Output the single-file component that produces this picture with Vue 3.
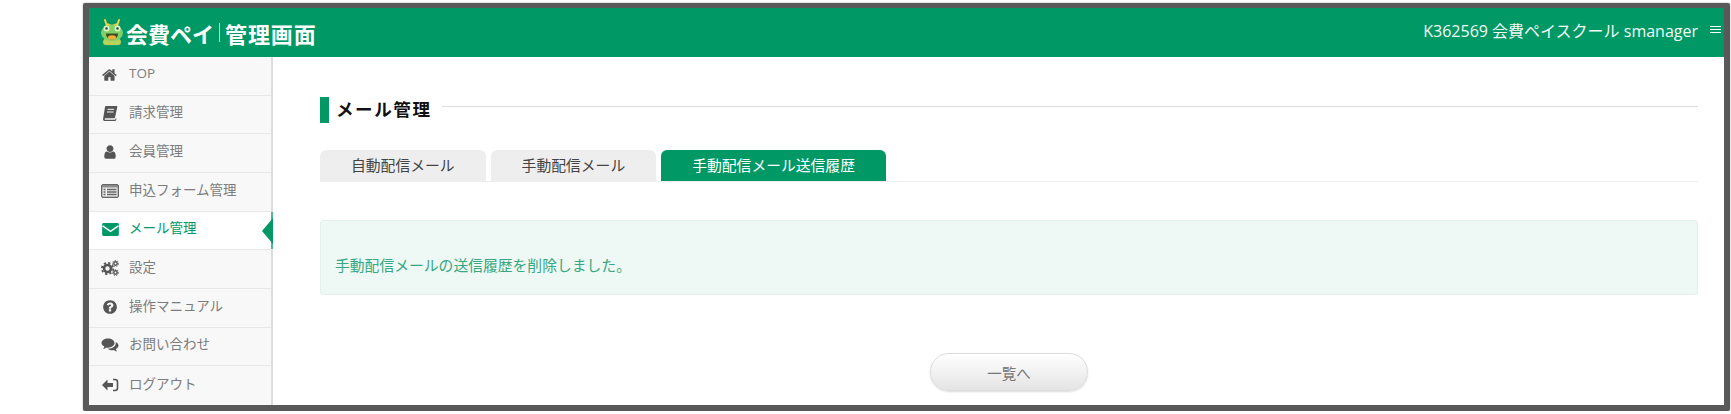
<script setup>
const menu = [
  { label: 'TOP', icon: 'home' },
  { label: '請求管理', icon: 'book' },
  { label: '会員管理', icon: 'user' },
  { label: '申込フォーム管理', icon: 'form' },
  { label: 'メール管理', icon: 'mail', active: true },
  { label: '設定', icon: 'gears' },
  { label: '操作マニュアル', icon: 'help' },
  { label: 'お問い合わせ', icon: 'chat' },
  { label: 'ログアウト', icon: 'logout' },
]
const tabs = [
  { label: '自動配信メール' },
  { label: '手動配信メール' },
  { label: '手動配信メール送信履歴', active: true },
]
</script>

<template>
  <div class="frame">
    <header class="header">
      <div class="logo">
        <svg class="frog" viewBox="0 0 24 28" width="24" height="28">
          <path d="M7 8 L5 2 M17 8 L19 2 M7 6 C10 8 14 8 17 6" fill="none" stroke="#e8d54a" stroke-width="2" stroke-linecap="round" />
          <path d="M3 24c0-2 2-4 4-4h10c2 0 4 2 4 4s-1 3-3 3H6c-2 0-3-1-3-3z" fill="#b9d25a" />
          <ellipse cx="12" cy="15" rx="11" ry="8" fill="#7fd06a" />
          <circle cx="6.500" cy="10.500" r="3" fill="#e4f3c8" />
          <circle cx="17.500" cy="10.500" r="3" fill="#e4f3c8" />
          <circle cx="6.500" cy="10.500" r="1.300" fill="#245a3a" />
          <circle cx="17.500" cy="10.500" r="1.300" fill="#245a3a" />
          <path d="M6 15.500h12c0 3.500-2.500 6-6 6s-6-2.500-6-6z" fill="#3f4a24" />
          <ellipse cx="12" cy="19.500" rx="4" ry="2.200" fill="#f2b035" />
        </svg>
        <span class="logo-a">会費ペイ</span>
        <span class="logo-sep"></span>
        <span class="logo-b">管理画面</span>
      </div>
      <div class="user">
        <span>K362569 会費ペイスクール smanager</span>
        <span class="burger"><i></i><i></i><i></i></span>
      </div>
    </header>

    <div class="body">
      <nav class="side">
        <div v-for="m in menu" :key="m.label" class="row" :class="{ on: m.active }">
          <span class="ico">
            <svg v-if="m.icon === 'home'" viewBox="0 0 1792 1792" width="16" height="16"><path fill="currentColor" d="M1408 992v480q0 26-19 45t-45 19h-384v-384h-256v384h-384q-26 0-45-19t-19-45v-480q0-1 .5-3t.5-3l575-474 575 474q1 2 1 6zm223-69l-62 74q-8 9-21 11h-3q-13 0-21-7l-692-577-692 577q-12 8-24 7-13-2-21-11l-62-74q-8-10-7-23.5t11-21.5l719-599q32-26 76-26t76 26l244 204v-195q0-14 9-23t23-9h192q14 0 23 9t9 23v408l219 182q10 8 11 21.5t-7 23.5z"/></svg>
            <svg v-else-if="m.icon === 'book'" viewBox="0 0 16 16" width="16" height="16"><path fill="currentColor" d="M4 1h10.500c.6 0 .9.500.8 1l-2.300 10.500c-.1.500-.5.800-1 .8H3.500c-.6 0-.9.300-.9.700s.3.700.9.700h9.300c.3 0 .5-.2.600-.4l.3-1 .8.300-.4 1.500c-.1.600-.7 1-1.300 1H3c-1.400 0-2.200-1.100-1.900-2.400L3 2c.1-.6.500-1 1-1z"/><path d="M5.600 4.300h6.500M5 7h6.500" stroke="#f8f8f8" stroke-width="1" fill="none"/></svg>
            <svg v-else-if="m.icon === 'user'" viewBox="0 0 1792 1792" width="16" height="16"><path fill="currentColor" d="M1536 1399q0 109-62.500 187t-150.500 78h-854q-88 0-150.500-78t-62.500-187q0-85 8.500-160.500t31.500-152 58.500-131 94-89 134.500-34.500q131 128 313 128t313-128q76 0 134.500 34.500t94 89 58.500 131 31.500 152 8.500 160.500zm-256-887q0 159-112.500 271.500t-271.500 112.500-271.500-112.500-112.500-271.500 112.500-271.500 271.500-112.500 271.500 112.500 112.500 271.500z"/></svg>
            <svg v-else-if="m.icon === 'form'" viewBox="0 0 18 14" width="18" height="14"><rect x="0.500" y="0.500" width="17" height="13" rx="1.500" fill="#8a8a8a" stroke="#666"/><rect x="1.500" y="3.500" width="15" height="9" fill="#eee"/><path d="M2.500 5.500h2M2.500 8h2M2.500 10.500h2M6 5.500h9.500M6 8h9.500M6 10.500h9.500" stroke="#666" stroke-width="1.300"/></svg>
            <svg v-else-if="m.icon === 'mail'" viewBox="0 0 18 14" width="17" height="13"><rect width="18" height="14" rx="1.500" fill="currentColor"/><path d="M0.500 3 L9 9 L17.500 3" fill="none" stroke="#fff" stroke-width="1.600"/></svg>
            <svg v-else-if="m.icon === 'gears'" viewBox="0 0 18 16" width="18" height="16" fill="none" stroke="currentColor"><circle cx="6.500" cy="8.500" r="3.500" stroke-width="2.600"/><circle cx="6.500" cy="8.500" r="5.600" stroke-width="1.800" stroke-dasharray="2.200 2.200"/><circle cx="14.500" cy="3.500" r="1.700" stroke-width="1.500"/><circle cx="14.500" cy="3.500" r="3" stroke-width="1" stroke-dasharray="1.300 1.300"/><circle cx="14.500" cy="12.500" r="1.700" stroke-width="1.500"/><circle cx="14.500" cy="12.500" r="3" stroke-width="1" stroke-dasharray="1.300 1.300"/></svg>
            <svg v-else-if="m.icon === 'help'" viewBox="0 0 1792 1792" width="16" height="16"><path fill="currentColor" d="M1024 1376v-192q0-14-9-23t-23-9h-192q-14 0-23 9t-9 23v192q0 14 9 23t23 9h192q14 0 23-9t9-23zm256-672q0-88-55.500-163t-138.500-116-170-41q-243 0-371 213-15 24 8 42l132 100q7 6 19 6 16 0 25-12 53-68 86-92 34-24 86-24 48 0 85.500 26t37.500 59q0 38-20 61t-68 45q-63 28-115.500 86.500t-52.500 125.500v36q0 14 9 23t23 9h192q14 0 23-9t9-23q0-19 21.500-49.500t54.500-49.500q32-18 49-28.500t46-35 44.500-48 28-60.500 12.500-81zm384 192q0 209-103 385.500t-279.500 279.500-385.500 103-385.500-103-279.500-279.500-103-385.500 103-385.500 279.500-279.500 385.500-103 385.500 103 279.500 279.500 103 385.500z"/></svg>
            <svg v-else-if="m.icon === 'chat'" viewBox="0 0 18 16" width="18" height="16"><path fill="currentColor" d="M7 1.500c3.600 0 6.500 2 6.500 4.600S10.600 10.700 7 10.700c-.6 0-1.100 0-1.600-.2-.9.800-2 1.300-3.200 1.500.6-.7 1-1.500 1.100-2.400C1.600 8.800.5 7.500.5 6.100.5 3.500 3.400 1.500 7 1.500z"/><path fill="currentColor" d="M14.700 5c1.700.8 2.800 2.100 2.800 3.600 0 1.400-1 2.700-2.600 3.500.2.900.5 1.700 1.100 2.400-1.200-.2-2.300-.7-3.200-1.500-.5.100-1 .2-1.600.2-1.900 0-3.600-.6-4.700-1.500 4.700.3 9-2.500 8.200-6.700z"/></svg>
            <svg v-else viewBox="0 0 18 16" width="18" height="16"><path fill="currentColor" d="M1 8l5.500-5.500V6H12v4H6.500v3.500z"/><path d="M12 2.500h2c1.400 0 2.500 1.100 2.500 2.500v6c0 1.400-1.100 2.500-2.500 2.500h-2" fill="none" stroke="currentColor" stroke-width="1.600"/></svg>
          </span>
          <span class="label">{{ m.label }}</span>
          <span v-if="m.active" class="arrow"></span>
        </div>
      </nav>

      <main class="main">
        <div class="title">
          <span class="title-bar"></span>
          <h1>メール管理</h1>
          <span class="title-line"></span>
        </div>

        <div class="tabs">
          <div v-for="t in tabs" :key="t.label" class="tab" :class="{ on: t.active }">{{ t.label }}</div>
        </div>

        <div class="alert">手動配信メールの送信履歴を削除しました。</div>

        <button class="back">一覧へ</button>
      </main>
    </div>
  </div>
</template>

<style>
html, body { background: #fff; overflow: hidden; }
</style>

<style scoped>
.frame {
  box-sizing: border-box;
  width: 1647px;
  height: 408px;
  margin: 3px 0 0 83px;
  border: solid #595959;
  border-width: 5px 6px 6px;
  border-radius: 2px;
  box-shadow: 0 0 2px rgba(0, 0, 0, .35);
  background: #fff;
  font-family: "Open Sans", "Noto Sans CJK JP", sans-serif;
  overflow: hidden;
}
.header {
  height: 49px;
  background: #009966;
  color: #fff;
  display: flex;
  align-items: center;
  justify-content: space-between;
}
.logo {
  display: flex;
  align-items: center;
  padding-left: 11px;
  font-size: 22px;
  font-weight: 700;
  font-family: "Noto Sans CJK JP", sans-serif;
  line-height: 30px;
}
.frog { margin-right: 2px; margin-top: -2px; }
.logo-sep {
  width: 1px;
  height: 19px;
  margin: 0 5px;
  background: rgba(255, 255, 255, .7);
}
.logo-b { letter-spacing: .9px; }
.user {
  display: flex;
  align-items: center;
  font-size: 16px;
  padding-bottom: 6px;
  color: #f2f8f4;
}
.burger {
  display: flex;
  flex-direction: column;
  gap: 2px;
  width: 11px;
  margin: 0 3px 0 12px;
}
.burger i { display: block; height: 1px; background: #fff; }
.body { display: flex; height: 348px; }
.side {
  box-sizing: border-box;
  flex: none;
  width: 184px;
  background: #f8f8f8;
  border-right: 2px solid #ddd;
  display: grid;
  grid-template-rows: repeat(9, 1fr);
}
.row {
  position: relative;
  display: flex;
  align-items: center;
  border-bottom: 1px solid #e8e8e8;
  color: #5a5a5a;
}
.row:last-child { border-bottom: 0; }
.ico {
  width: 18px;
  margin: 0 10px 2px 12px;
  display: flex;
  justify-content: center;
  color: #555;
}
.label {
  font-size: 13.5px;
  color: #7c7c7c;
  padding-bottom: 6px;
}
.row.on { background: #fff; margin-right: -2px; z-index: 1; }
.row.on .ico, .row.on .label { color: #009966; }
.arrow {
  position: absolute;
  right: 0;
  top: 0;
  bottom: 0;
  width: 2px;
  background: #4db893;
}
.arrow::before {
  content: "";
  position: absolute;
  right: 0;
  top: 6px;
  border-style: solid;
  border-width: 13px 11px 13px 0;
  border-color: transparent #009966 transparent transparent;
}
.main {
  flex: 1;
  min-width: 0;
  padding: 40px 26px 0 47px;
}
.title { display: flex; height: 26px; }
.title-bar { width: 9px; background: #009966; }
h1 {
  margin: 0 10px 0 7px;
  font-size: 17.5px;
  font-weight: 700;
  letter-spacing: 1.6px;
  line-height: 25px;
  color: #111;
}
.title-line {
  flex: 1;
  height: 1px;
  margin-top: 9px;
  background: #ddd;
}
.tabs {
  display: flex;
  gap: 5px;
  margin-top: 27px;
  height: 31px;
  border-bottom: 1px solid #eee;
}
.tab {
  box-sizing: border-box;
  padding: 0 31px;
  height: 31px;
  line-height: 30px;
  font-size: 14.8px;
  color: #444;
  background: #eee;
  border-radius: 6px 6px 0 0;
}
.tab.on { background: #009966; color: #fff; }
.alert {
  box-sizing: border-box;
  height: 75px;
  margin-top: 38px;
  padding: 34px 14px 0;
  line-height: 20px;
  font-size: 14.8px;
  color: #36a77f;
  background: #eef8f5;
  border: 1px solid #e2f1ec;
  border-radius: 3px;
}
.back {
  display: block;
  width: 158px;
  height: 38px;
  margin: 58px auto 0;
  font: inherit;
  font-size: 14.5px;
  color: #777;
  background: linear-gradient(#fff, #e4e4e4);
  border: 1px solid #ddd;
  border-radius: 19px;
  box-shadow: 0 1px 2px rgba(0, 0, 0, .15);
}
</style>
